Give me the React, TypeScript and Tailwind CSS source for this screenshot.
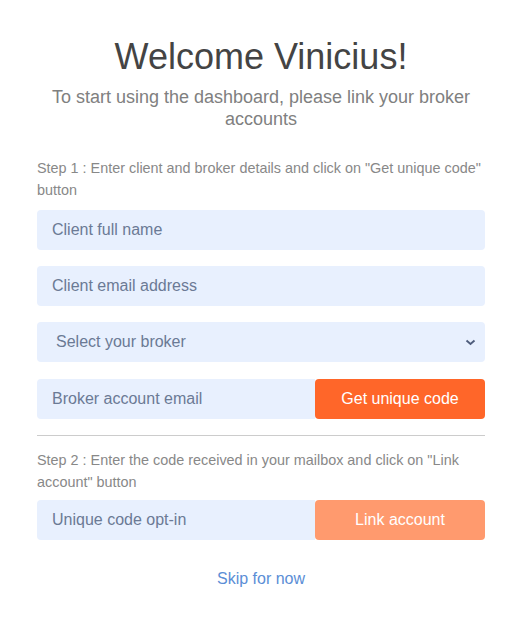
import React from "react";

export default function App() {
  const font = { fontFamily: '"Liberation Sans", Arial, sans-serif' };
  return (
    <div className="min-h-[634px] w-full bg-white" style={font}>
      <div className="mx-auto w-[448px] pt-[37px]">
        <h1 className="text-center text-[36px] leading-[40px] text-[#444444]">Welcome Vinicius!</h1>
        <p className="mt-[9px] px-[10px] text-center text-[18px] leading-[22px] text-[#808080]">
          To start using the dashboard, please link your broker accounts
        </p>
        <p className="mt-[27px] text-[14.4px] leading-[22px] text-[#888888]">
          Step 1 : Enter client and broker details and click on "Get unique code" button
        </p>
        <div className="mt-[9px] flex flex-col gap-4">
          <input
            placeholder="Client full name"
            className="h-10 w-full rounded bg-[#e8f0fe] px-[15px] text-[16px] text-[#5f6f8f] outline-none placeholder:text-[#6b7a95]"
          />
          <input
            placeholder="Client email address"
            className="h-10 w-full rounded bg-[#e8f0fe] px-[15px] text-[16px] text-[#5f6f8f] outline-none placeholder:text-[#6b7a95]"
          />
          <div className="flex h-10 w-full items-center justify-between rounded bg-[#e8f0fe] pl-[19px] pr-[6px] text-[16px] text-[#6b7a95]">
            <span>Select your broker</span>
            <svg width="11" height="8" viewBox="0 0 11 8" fill="none" className="mr-[3px]">
              <path d="M1.5 2.5 L5.5 6 L9.5 2.5" stroke="#4f5d7c" strokeWidth="1.9" />
            </svg>
          </div>
        </div>
        <div className="mt-[17px] flex h-10">
          <input
            placeholder="Broker account email"
            className="h-10 min-w-0 flex-1 rounded-l bg-[#e8f0fe] px-[15px] text-[16px] outline-none placeholder:text-[#6b7a95]"
          />
          <button className="h-10 w-[170px] rounded bg-[#ff6629] text-[16px] text-white">Get unique code</button>
        </div>
        <div className="mt-[16px] h-px bg-[#cccccc]" />
        <p className="mt-[13px] text-[14.4px] leading-[22px] text-[#888888]">
          Step 2 : Enter the code received in your mailbox and click on "Link account" button
        </p>
        <div className="mt-[7px] flex h-10">
          <input
            placeholder="Unique code opt-in"
            className="h-10 min-w-0 flex-1 rounded-l bg-[#e8f0fe] px-[15px] text-[16px] outline-none placeholder:text-[#6b7a95]"
          />
          <button className="h-10 w-[170px] rounded bg-[#ff9a6e] text-[16px] text-white">Link account</button>
        </div>
        <div className="mt-[27px] text-center text-[16px] leading-[24px]">
          <a className="text-[#5b8ed6]">Skip for now</a>
        </div>
      </div>
    </div>
  );
}
